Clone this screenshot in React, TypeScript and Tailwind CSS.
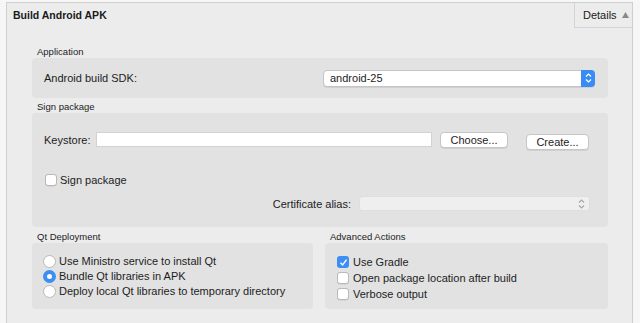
import React from "react";

const font = { fontFamily: '"Liberation Sans", Arial, sans-serif' };

const UpDown = ({ color }: { color: string }) => (
  <svg width="7" height="10" viewBox="0 0 7 10" fill="none">
    <path d="M1 3.5 L3.5 1 L6 3.5" stroke={color} strokeWidth="1.2" />
    <path d="M1 6.5 L3.5 9 L6 6.5" stroke={color} strokeWidth="1.2" />
  </svg>
);

const Checkbox = ({ checked }: { checked?: boolean }) =>
  checked ? (
    <span className="flex h-[12px] w-[12px] items-center justify-center rounded-[3px] bg-[#3c8df5]">
      <svg width="9" height="9" viewBox="0 0 9 9" fill="none">
        <path d="M1.5 4.8 L3.6 7 L7.6 1.6" stroke="white" strokeWidth="1.4" />
      </svg>
    </span>
  ) : (
    <span className="h-[12px] w-[12px] rounded-[3px] border border-[#b9b9b9] bg-white shadow-[0_0.5px_0.5px_rgba(0,0,0,0.1)]" />
  );

const Radio = ({ checked }: { checked?: boolean }) =>
  checked ? (
    <span className="flex h-[13px] w-[13px] items-center justify-center rounded-full bg-[#3c8df5]">
      <span className="h-[5px] w-[5px] rounded-full bg-white" />
    </span>
  ) : (
    <span className="h-[13px] w-[13px] rounded-full border border-[#b9b9b9] bg-white" />
  );

const GroupLabel = ({ children }: { children: React.ReactNode }) => (
  <div className="h-[12px] pl-[5px] text-[9.5px] leading-[12px] text-[#222]">{children}</div>
);

const Button = ({ children, className = "" }: { children: React.ReactNode; className?: string }) => (
  <div
    className={`flex h-[16px] items-center justify-center rounded-[4px] border border-[#c6c6c6] bg-white text-[11px] text-[#1d1d1d] shadow-[0_1px_0.5px_rgba(0,0,0,0.08)] ${className}`}
  >
    {children}
  </div>
);

export default function App() {
  return (
    <div className="h-[323px] w-[640px] overflow-hidden bg-[#f6f6f6] pt-[2px] pl-[6px] pr-[7px]" style={font}>
      <div className="flex h-[330px] flex-col border-t border-l border-r border-[#cfcfcf] bg-[#ececec]">
        <div className="flex h-[25px] items-start justify-between">
          <div className="pl-[6px] pt-[6px] text-[10.5px] font-bold leading-[13px] text-[#1a1a1a]">Build Android APK</div>
          <div className="flex h-[25px] w-[58px] items-center gap-[5px] border-l border-b border-[#d4d4d4] pl-[8px] text-[11px] text-[#1a1a1a]">
            Details
            <svg width="7" height="6" viewBox="0 0 7 6">
              <path d="M3.5 0 L7 6 L0 6 Z" fill="#8a8a8a" />
            </svg>
          </div>
        </div>

        <div className="mt-[18px] ml-[25px] mr-[24px] flex flex-col text-[11px] text-[#1d1d1d]">
          <GroupLabel>Application</GroupLabel>
          <div className="flex h-[40px] items-center justify-between rounded-[4px] bg-[#e2e2e2] pl-[12px] pr-[13px]">
            <span>Android build SDK:</span>
            <div className="flex h-[17px] w-[272px] items-center justify-between rounded-[4px] border border-[#c4c4c4] bg-white pl-[6px] shadow-[0_1px_0.5px_rgba(0,0,0,0.08)]">
              <span>android-25</span>
              <span className="-mr-px flex h-[17px] w-[14px] items-center justify-center rounded-r-[4px] bg-[#3a8cf5]">
                <UpDown color="white" />
              </span>
            </div>
          </div>

          <div className="mt-[3px]">
            <GroupLabel>Sign package</GroupLabel>
          </div>
          <div className="flex h-[114px] flex-col rounded-[4px] bg-[#e2e2e2] pl-[12px] pr-[18px] pt-[19px]">
            <div className="flex items-start">
              <span className="mt-[1px] w-[52px] leading-[15px]">Keystore:</span>
              <div className="h-[15px] w-[336px] border border-[#d2d2d2] bg-white" />
              <Button className="ml-[8px] w-[68px]">Choose...</Button>
              <Button className="ml-[18px] mt-[2px] w-[63px]">Create...</Button>
            </div>
            <div className="mt-[22px] flex items-center gap-[3px] pl-[1px]">
              <Checkbox />
              <span>Sign package</span>
            </div>
            <div className="mt-[7px] flex items-center justify-end pr-[-2px]">
              <span className="mr-[8px]">Certificate alias:</span>
              <div className="flex h-[15px] w-[231px] items-center justify-end rounded-[3px] border border-[#dedede] bg-[#efefef] pr-[4px]">
                <UpDown color="#a8a8a8" />
              </div>
            </div>
          </div>

          <div className="mt-[4px] flex gap-[12px]">
            <div className="flex w-[281px] flex-col">
              <GroupLabel>Qt Deployment</GroupLabel>
              <div className="flex h-[66px] flex-col gap-[2px] rounded-[4px] bg-[#e2e2e2] pl-[11px] pt-[12px]">
                {[
                  ["Use Ministro service to install Qt", false],
                  ["Bundle Qt libraries in APK", true],
                  ["Deploy local Qt libraries to temporary directory", false],
                ].map(([label, on]) => (
                  <div key={label as string} className="flex h-[13px] items-center gap-[3px]">
                    <Radio checked={on as boolean} />
                    <span>{label}</span>
                  </div>
                ))}
              </div>
            </div>
            <div className="flex flex-1 flex-col">
              <GroupLabel>Advanced Actions</GroupLabel>
              <div className="flex h-[66px] flex-col gap-[4px] rounded-[4px] bg-[#e2e2e2] pl-[12px] pt-[13px]">
                {[
                  ["Use Gradle", true],
                  ["Open package location after build", false],
                  ["Verbose output", false],
                ].map(([label, on]) => (
                  <div key={label as string} className="flex h-[12px] items-center gap-[4px]">
                    <Checkbox checked={on as boolean} />
                    <span>{label}</span>
                  </div>
                ))}
              </div>
            </div>
          </div>
        </div>
      </div>
    </div>
  );
}
